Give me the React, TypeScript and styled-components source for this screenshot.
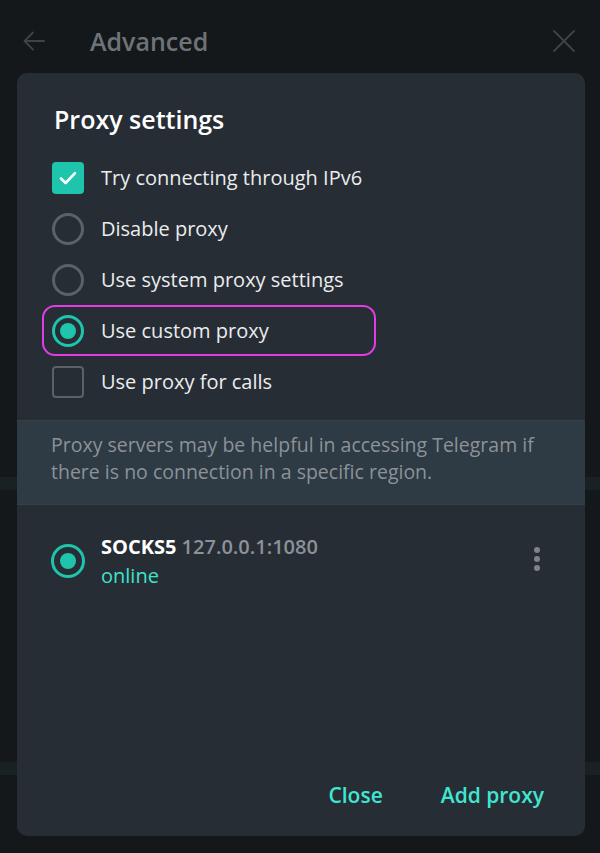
import React from 'react';
import styled, { createGlobalStyle } from 'styled-components';

const GlobalStyle = createGlobalStyle`
  html, body {
    margin: 0;
    padding: 0;
    background: #14181b;
    font-family: "Open Sans", "Noto Sans", sans-serif;
    -webkit-font-smoothing: antialiased;
  }
`;

const Page = styled.div`
  width: 600px;
  height: 853px;
  overflow: hidden;
  display: flex;
  flex-direction: column;
  background:
    linear-gradient(#14181b, #14181b) 0 0 / 100% 477px no-repeat,
    linear-gradient(#1a2125, #1a2125) 0 477px / 100% 13px no-repeat,
    linear-gradient(#14181b, #14181b) 0 490px / 100% 272px no-repeat,
    linear-gradient(#1a2125, #1a2125) 0 762px / 100% 13px no-repeat,
    #14181b;
`;

const TopBar = styled.div`
  height: 73px;
  flex: none;
  display: flex;
  align-items: center;
  padding: 8px 24px 0 22px;
  box-sizing: border-box;
`;

const IconButton = styled.button`
  background: none;
  border: none;
  padding: 0;
  display: flex;
  align-items: center;
  justify-content: center;
  color: #3d4349;
  cursor: pointer;
`;

const TopTitle = styled.div`
  flex: 1;
  margin-left: 44px;
  font-size: 25px;
  font-weight: 600;
  color: #6e7378;
`;

const Dialog = styled.div`
  margin: 0 15px 0 17px;
  height: 763px;
  background: #272d35;
  border-radius: 10px;
  display: flex;
  flex-direction: column;
  overflow: hidden;
`;

const DialogTitle = styled.h2`
  margin: 0;
  padding: 30px 0 0 37px;
  font-size: 25px;
  line-height: 32px;
  font-weight: 600;
  color: #ffffff;
`;

const Options = styled.div`
  padding: 17px 0 0 35px;
  display: flex;
  flex-direction: column;
`;

const Row = styled.div`
  position: relative;
  height: 51px;
  display: flex;
  align-items: center;
  gap: 17px;
  color: #ebecee;
  font-size: 20px;
`;

const Highlight = styled.span`
  position: absolute;
  left: -10px;
  top: 0;
  width: 334px;
  height: 51px;
  box-sizing: border-box;
  border: 2px solid #e23ce6;
  border-radius: 13px;
  pointer-events: none;
`;

const Box = styled.span<{ $checked?: boolean }>`
  width: 32px;
  height: 32px;
  box-sizing: border-box;
  flex: none;
  border-radius: 4px;
  display: flex;
  align-items: center;
  justify-content: center;
  background: ${p => (p.$checked ? '#1fc4ad' : 'transparent')};
  border: ${p => (p.$checked ? 'none' : '2.5px solid #5b6168')};
`;

const Radio = styled.span<{ $checked?: boolean; $size?: number }>`
  width: ${p => p.$size ?? 32}px;
  height: ${p => p.$size ?? 32}px;
  box-sizing: border-box;
  flex: none;
  border-radius: 50%;
  display: flex;
  align-items: center;
  justify-content: center;
  border: 3px solid ${p => (p.$checked ? '#1fc4ad' : '#5b6168')};
`;

const Dot = styled.span<{ $size?: number }>`
  width: ${p => p.$size ?? 16}px;
  height: ${p => p.$size ?? 16}px;
  border-radius: 50%;
  background: #1fc4ad;
`;

const InfoBand = styled.div`
  margin-top: 13px;
  height: 85px;
  box-sizing: border-box;
  background: #2e3a44;
  border-top: 1px solid #34414b;
  border-bottom: 1px solid #34414b;
  padding: 10px 30px 0 34px;
  font-size: 19.5px;
  line-height: 27px;
  color: #8c9298;
`;

const ProxyItem = styled.div`
  display: flex;
  align-items: center;
  padding: 27px 45px 0 34px;
`;

const ProxyText = styled.div`
  flex: 1;
  margin-left: 16px;
  display: flex;
  flex-direction: column;
`;

const ProxyLine = styled.div`
  font-size: 20px;
  line-height: 29px;
  color: #8c9298;
  font-weight: 600;
`;

const ProxyType = styled.span`
  color: #ffffff;
  font-weight: 700;
`;

const Status = styled.div`
  font-size: 20px;
  line-height: 29px;
  color: #3fe2cb;
`;

const MoreDots = styled.div`
  display: flex;
  flex-direction: column;
  gap: 3px;
  margin-bottom: 4px;
`;

const SmallDot = styled.span`
  width: 6px;
  height: 6px;
  border-radius: 50%;
  background: #7d8388;
`;

const Spacer = styled.div`
  flex: 1;
`;

const Footer = styled.div`
  display: flex;
  justify-content: flex-end;
  align-items: center;
  gap: 34px;
  padding: 0 29px 27px 0;
`;

const TextButton = styled.button`
  background: none;
  border: none;
  padding: 0 12px;
  font-family: inherit;
  font-size: 21px;
  line-height: 28px;
  font-weight: 600;
  color: #41e6d2;
  cursor: pointer;
`;

const Check = () => (
  <svg width="20" height="16" viewBox="0 0 20 16" fill="none">
    <path d="M3 8.5 L7.6 13 L17 3.2" stroke="#ffffff" strokeWidth="2.6" strokeLinecap="round" strokeLinejoin="round" />
  </svg>
);

export default function App() {
  return (
    <>
      <GlobalStyle />
      <Page>
        <TopBar>
          <IconButton aria-label="Back">
            <svg width="24" height="24" viewBox="0 0 24 24" fill="none">
              <path d="M22 12 H3 M11 3.5 L2.5 12 L11 20.5" stroke="currentColor" strokeWidth="1.8" strokeLinecap="round" strokeLinejoin="round" />
            </svg>
          </IconButton>
          <TopTitle>Advanced</TopTitle>
          <IconButton aria-label="Close">
            <svg width="24" height="24" viewBox="0 0 24 24" fill="none">
              <path d="M2 2 L22 22 M22 2 L2 22" stroke="currentColor" strokeWidth="1.8" strokeLinecap="round" />
            </svg>
          </IconButton>
        </TopBar>

        <Dialog>
          <DialogTitle>Proxy settings</DialogTitle>
          <Options>
            <Row>
              <Box $checked><Check /></Box>
              Try connecting through IPv6
            </Row>
            <Row>
              <Radio />
              Disable proxy
            </Row>
            <Row>
              <Radio />
              Use system proxy settings
            </Row>
            <Row>
              <Highlight />
              <Radio $checked><Dot /></Radio>
              Use custom proxy
            </Row>
            <Row>
              <Box />
              Use proxy for calls
            </Row>
          </Options>

          <InfoBand>
            Proxy servers may be helpful in accessing Telegram if there is no connection in a specific region.
          </InfoBand>

          <ProxyItem>
            <Radio $checked $size={34}><Dot $size={16} /></Radio>
            <ProxyText>
              <ProxyLine><ProxyType>SOCKS5</ProxyType> 127.0.0.1:1080</ProxyLine>
              <Status>online</Status>
            </ProxyText>
            <MoreDots>
              <SmallDot />
              <SmallDot />
              <SmallDot />
            </MoreDots>
          </ProxyItem>

          <Spacer />

          <Footer>
            <TextButton>Close</TextButton>
            <TextButton>Add proxy</TextButton>
          </Footer>
        </Dialog>
      </Page>
    </>
  );
}
